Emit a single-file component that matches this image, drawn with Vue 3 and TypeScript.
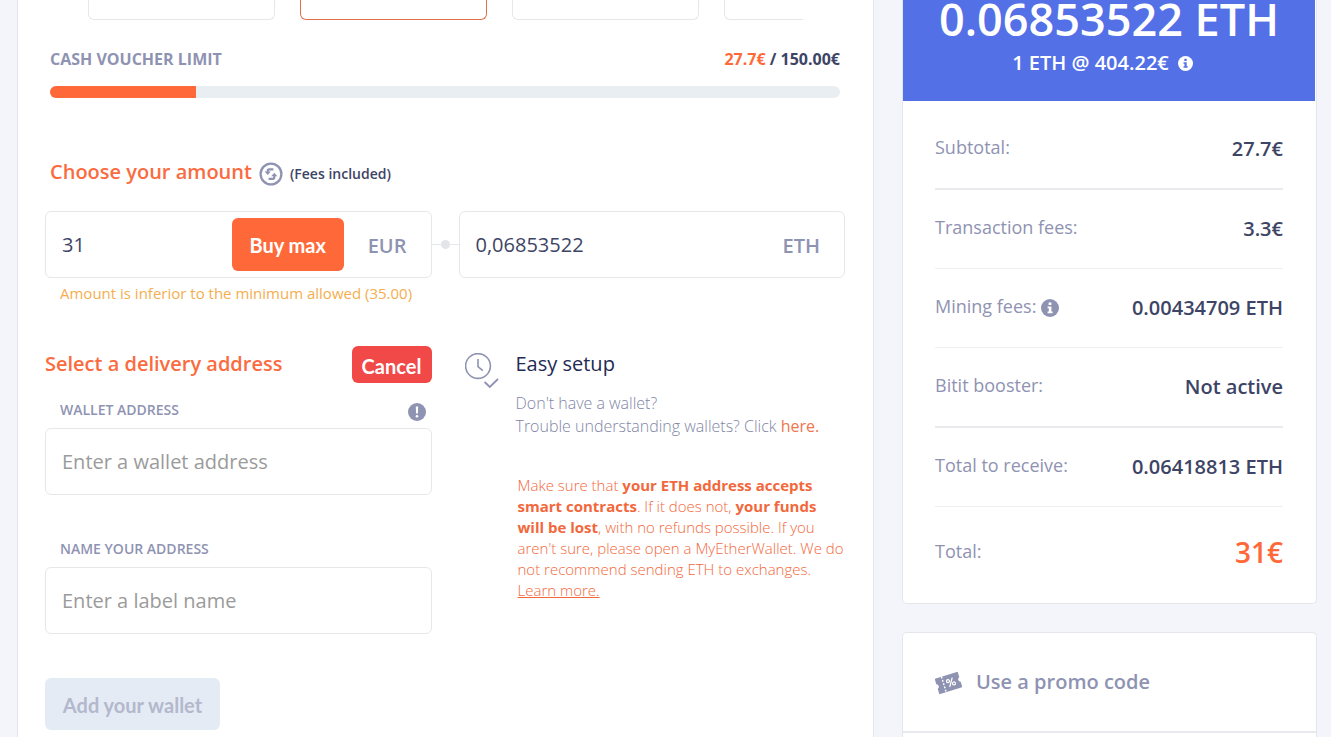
<script setup lang="ts">
import { computed, ref } from 'vue'

interface SummaryRow {
  label: string
  value: string
  info?: boolean
  strong?: boolean
}

const used = 27.7
const limit = 150
const usedPercent = computed(() => `${(used / limit) * 100}%`)

const slides = [
  { id: 1, active: false },
  { id: 2, active: true },
  { id: 3, active: false },
  { id: 4, active: false },
]

const fiat = ref('31')
const crypto = ref('0,06853522')
const wallet = ref('')
const walletName = ref('')

const rows: SummaryRow[] = [
  { label: 'Subtotal:', value: '27.7€', strong: true },
  { label: 'Transaction fees:', value: '3.3€' },
  { label: 'Mining fees:', value: '0.00434709 ETH', info: true },
  { label: 'Bitit booster:', value: 'Not active', strong: true },
  { label: 'Total to receive:', value: '0.06418813 ETH' },
]
</script>

<template>
  <div class="page">
    <main class="panel order">
      <div class="slides">
        <div v-for="s in slides" :key="s.id" class="slide" :class="{ active: s.active }"></div>
      </div>

      <section class="limit">
        <div class="limit-head">
          <span class="limit-title">CASH VOUCHER LIMIT</span>
          <span class="limit-value"><span class="accent">{{ used }}€</span> / {{ limit.toFixed(2) }}€</span>
        </div>
        <div class="track"><div class="fill" :style="{ width: usedPercent }"></div></div>
      </section>

      <div class="amount-head">
        <h2>Choose your amount</h2>
        <svg class="swap" viewBox="0 0 24 24" aria-hidden="true">
          <circle cx="12" cy="12" r="10.4" fill="none" stroke="#8f93b2" stroke-width="2.3" />
          <path d="M5.6 9.6H11.8L8.7 13ZM12.2 14.2H18.4L15.3 10.8Z" fill="#8f93b2" />
          <path d="M14.4 7.4H10.2Q8.7 7.4 8.7 9V10.4M9.6 16.8H13.8Q15.3 16.8 15.3 15.2V13.6" fill="none" stroke="#8f93b2" stroke-width="2.2" />
        </svg>
        <span class="fees">(Fees included)</span>
      </div>

      <div class="amounts">
        <div class="box">
          <input v-model="fiat" type="text" aria-label="Amount in EUR" />
          <button type="button" class="btn buy">Buy max</button>
          <span class="unit">EUR</span>
        </div>
        <div class="link-line"><span class="dot"></span></div>
        <div class="box">
          <input v-model="crypto" type="text" aria-label="Amount in ETH" />
          <span class="unit">ETH</span>
        </div>
      </div>
      <p class="warning">Amount is inferior to the minimum allowed (35.00)</p>

      <div class="delivery">
        <form class="address" @submit.prevent>
          <div class="address-head">
            <h2>Select a delivery address</h2>
            <button type="button" class="btn cancel">Cancel</button>
          </div>
          <div class="label-row">
            <label for="wallet">WALLET ADDRESS</label>
            <svg class="alert" viewBox="0 0 18 18" aria-hidden="true">
              <circle cx="9" cy="9" r="9" fill="#8f93b2" />
              <path d="M7.8 3.6H10.2L9.9 10.6H8.1Z" fill="#fff" />
              <circle cx="9" cy="13.2" r="1.3" fill="#fff" />
            </svg>
          </div>
          <input id="wallet" v-model="wallet" class="field" type="text" placeholder="Enter a wallet address" />
          <div class="label-row second">
            <label for="wallet-name">NAME YOUR ADDRESS</label>
          </div>
          <input id="wallet-name" v-model="walletName" class="field" type="text" placeholder="Enter a label name" />
          <button type="submit" class="btn add" disabled>Add your wallet</button>
        </form>

        <section class="setup">
          <svg class="clock" viewBox="0 0 34 36" fill="none" stroke="#8f93b2" aria-hidden="true">
            <circle cx="13" cy="13" r="12.4" stroke-width="1.6" />
            <path d="M13 6V13.6L17.8 17.6" stroke-width="1.6" />
            <path d="M19.6 29L24.8 34L33 26" stroke-width="1.8" />
          </svg>
          <div class="setup-body">
            <h3>Easy setup</h3>
            <p class="hint">Don't have a wallet?<br />Trouble understanding wallets? Click <a href="#">here.</a></p>
            <p class="notice">
              Make sure that <strong>your ETH address accepts smart contracts</strong>. If it does not,
              <strong>your funds will be lost</strong>, with no refunds possible. If you aren't sure, please open a
              MyEtherWallet. We do not recommend sending ETH to exchanges. <a href="#">Learn more.</a>
            </p>
          </div>
        </section>
      </div>
    </main>

    <aside class="side">
      <section class="panel summary">
        <header class="quote">
          <div class="quote-total">0.06853522 ETH</div>
          <div class="quote-rate">
            <span>1 ETH @ 404.22€</span>
            <svg class="info-small" viewBox="0 0 18 18" aria-hidden="true">
              <circle cx="9" cy="9" r="9" fill="#fff" />
              <path d="M7.6 3.4H10.4V6H7.6ZM6.6 7.4H10.4V12.4H11.6V14.2H6.6V12.4H7.8V9.2H6.6Z" fill="#5370e6" />
            </svg>
          </div>
        </header>
        <dl class="rows">
          <div v-for="r in rows" :key="r.label" class="row" :class="{ strong: r.strong }">
            <dt>
              {{ r.label }}
              <svg v-if="r.info" class="info" viewBox="0 0 18 18" aria-hidden="true">
                <circle cx="9" cy="9" r="9" fill="#8f93b2" />
                <path d="M7.6 3.4H10.4V6H7.6ZM6.6 7.4H10.4V12.4H11.6V14.2H6.6V12.4H7.8V9.2H6.6Z" fill="#fff" />
              </svg>
            </dt>
            <dd>{{ r.value }}</dd>
          </div>
          <div class="row total">
            <dt>Total:</dt>
            <dd>31€</dd>
          </div>
        </dl>
      </section>

      <section class="panel promo">
        <button type="button" class="promo-toggle">
          <svg class="ticket" viewBox="0 0 27 24" aria-hidden="true">
            <g transform="rotate(-17 13.5 12)">
              <path d="M1.5 4H25.5V9.6A2.5 2.5 0 0 0 25.5 14.4V20H1.5V14.4A2.5 2.5 0 0 0 1.5 9.6Z" fill="#8f93b2" />
              <path d="M8.6 4V20" stroke="#fff" stroke-width="1.4" stroke-dasharray="1.8 1.6" />
              <path d="M18.6 8L13.6 16" stroke="#fff" stroke-width="1.3" />
              <circle cx="13.6" cy="10" r="1.5" fill="none" stroke="#fff" stroke-width="1.2" />
              <circle cx="18.6" cy="14" r="1.5" fill="none" stroke="#fff" stroke-width="1.2" />
            </g>
          </svg>
          <span>Use a promo code</span>
        </button>
      </section>
    </aside>
  </div>
</template>

<style>
body {
  margin: 0;
  background: #f4f5fa;
}
</style>

<style scoped>
* {
  box-sizing: border-box;
}

.page {
  display: grid;
  grid-template-columns: minmax(0, 1fr) 415px;
  gap: 28px;
  min-height: 100vh;
  padding: 0 14px 0 17px;
  background: #f4f5fa;
  color: #3d4465;
  font-family: "Open Sans", sans-serif;
}

h2,
h3,
p,
dl,
dd {
  margin: 0;
}

button,
input {
  font-family: inherit;
}

.panel {
  background: #fff;
  border: 1px solid #e4e6ec;
}

.order {
  border-width: 0 1px;
}

.slides {
  display: grid;
  grid-auto-flow: column;
  grid-auto-columns: 187px;
  gap: 25px;
  margin: 0 70px;
  overflow: hidden;
}

.slide {
  height: 20px;
  border: 1px solid #e6e7ea;
  border-top: 0;
  border-radius: 0 0 6px 6px;
}

.slide.active {
  border-color: #e0704c;
}

.limit {
  margin: 27px 33px 0 32px;
}

.limit-head {
  display: flex;
  justify-content: space-between;
  font-size: 16px;
  font-weight: 700;
  line-height: 24px;
}

.limit-title {
  color: #8f93b2;
}

.accent {
  color: #ff6939;
}

.track {
  height: 12px;
  margin-top: 15px;
  overflow: hidden;
  background: #e9eef2;
  border-radius: 6px;
}

.fill {
  height: 100%;
  background: #ff6939;
}

h2 {
  color: #fa6c40;
  font-size: 20px;
  font-weight: 600;
  line-height: 28px;
}

.amount-head {
  display: flex;
  align-items: center;
  margin: 60px 32px 0;
}

.swap {
  width: 24px;
  height: 24px;
  margin: 4px 7px 0;
}

.fees {
  padding-top: 4px;
  font-size: 14px;
  font-weight: 600;
  line-height: 20px;
}

.amounts {
  display: grid;
  grid-template-columns: minmax(0, 1fr) 27px minmax(0, 1fr);
  margin: 25px 28px 0 27px;
}

.box {
  display: flex;
  align-items: center;
  height: 67px;
  padding: 0 24px 0 0;
  border: 1px solid #e6e7ea;
  border-radius: 6px;
}

.box input {
  flex: 1;
  min-width: 0;
  height: 100%;
  padding: 0 0 0 16px;
  border: 0;
  outline: 0;
  background: none;
  color: #3d4465;
  font-size: 20px;
}

.unit {
  color: #8f93b2;
  font-size: 20px;
  font-weight: 600;
  padding-top: 2px;
}

.btn {
  border: 0;
  border-radius: 6px;
  color: #fff;
  font-family: Lato, sans-serif;
  font-size: 20px;
  font-weight: 700;
  padding: 1px 0 0;
}

.buy {
  width: 112px;
  height: 53px;
  margin-right: 24px;
  background: #ff6939;
}

.link-line {
  display: flex;
  align-items: center;
  justify-content: center;
  height: 67px;
  background: linear-gradient(#e6e7ea, #e6e7ea) center / 100% 1px no-repeat;
}

.dot {
  width: 9px;
  height: 9px;
  border-radius: 50%;
  background: #e4e5ea;
}

.warning {
  margin: 4px 0 0 42px;
  color: #f5ae4e;
  font-size: 15px;
  line-height: 22px;
}

.delivery {
  display: grid;
  grid-template-columns: minmax(0, 1fr) minmax(0, 1fr);
  gap: 27px;
  margin: 42px 28px 0 27px;
}

.address-head {
  display: flex;
  justify-content: space-between;
  align-items: center;
}

.address-head h2 {
  padding-bottom: 2px;
}

.cancel {
  width: 80px;
  height: 37px;
  padding-top: 2px;
  background: #f14848;
}

.label-row {
  display: flex;
  justify-content: space-between;
  align-items: center;
  height: 20px;
  margin: 17px 6px 8px 15px;
}

.label-row.second {
  margin-top: 44px;
}

label {
  color: #8f93b2;
  font-size: 14px;
  font-weight: 600;
  line-height: 20px;
}

.alert {
  width: 18px;
  height: 18px;
  margin-top: 3px;
}

.field {
  display: block;
  width: 100%;
  height: 67px;
  padding: 0 16px;
  border: 1px solid #e6e7ea;
  border-radius: 6px;
  outline: 0;
  background: #fff;
  color: #3d4465;
  font-size: 20px;
}

.field::placeholder {
  color: #9b9b9b;
  opacity: 1;
}

.add {
  width: 175px;
  height: 52px;
  margin-top: 44px;
  background: #e5ebf5;
  color: #b3b8cd;
}

.setup {
  display: flex;
  align-items: flex-start;
  gap: 17px;
  padding-left: 6px;
}

.clock {
  flex: none;
  width: 34px;
  height: 36px;
  margin-top: 7px;
}

.setup h3 {
  color: #232a55;
  font-size: 20px;
  font-weight: 400;
  line-height: 28px;
  margin-top: 4px;
}

.hint {
  margin-top: 14px;
  color: #8186a6;
  font-size: 16px;
  font-weight: 300;
  line-height: 23px;
}

.hint a {
  color: #f0764e;
  font-weight: 400;
  text-decoration: none;
}

.notice {
  margin: 37px 0 0 2px;
  color: #f2683c;
  font-size: 15px;
  font-weight: 300;
  line-height: 21px;
}

.notice strong {
  font-weight: 700;
}

.notice a {
  color: inherit;
}

.side {
  display: flex;
  flex-direction: column;
  gap: 28px;
}

.summary {
  border-top: 0;
  border-radius: 0 0 5px 5px;
}

.quote {
  height: 101px;
  margin-right: 1px;
  overflow: hidden;
  background: #5370e6;
  color: #fff;
  font-weight: 600;
  text-align: center;
}

.quote-total {
  margin-top: -6px;
  font-size: 45px;
  line-height: 50px;
}

.quote-rate {
  display: flex;
  align-items: center;
  justify-content: center;
  gap: 9px;
  margin-top: 5px;
  padding-right: 13px;
  font-size: 20px;
  line-height: 28px;
}

.info-small {
  width: 15px;
  height: 15px;
}

.rows {
  padding: 9px 33px 0 32px;
}

.row {
  display: flex;
  justify-content: space-between;
  align-items: center;
  height: 79px;
  border-bottom: 1px solid #eeeff2;
}

.row.strong {
  height: 80px;
  border-bottom: 2px solid #e9eaed;
}

.row dt {
  display: flex;
  align-items: center;
  gap: 5px;
  padding-bottom: 4px;
  color: #8f93b2;
  font-size: 18px;
  font-weight: 400;
  line-height: 24px;
}

.info {
  width: 18px;
  height: 18px;
  margin-top: 3px;
}

.row dd {
  font-size: 20px;
  font-weight: 600;
  line-height: 28px;
}

.row.total {
  height: 96px;
  padding-bottom: 7px;
  border-bottom: 0;
}

.row.total dt {
  padding-bottom: 2px;
}

.row.total dd {
  color: #ff6939;
  font-size: 28px;
}

.promo {
  flex: 1;
  border-bottom: 0;
  border-radius: 5px 5px 0 0;
}

.promo-toggle {
  display: flex;
  align-items: center;
  gap: 14px;
  width: 100%;
  height: 100px;
  padding: 0 32px 2px;
  border: 0;
  border-bottom: 2px solid #e9eaed;
  background: none;
  color: #8f93b2;
  font-size: 20px;
  font-weight: 600;
}

.ticket {
  width: 27px;
  height: 24px;
  margin-top: 4px;
}
</style>
